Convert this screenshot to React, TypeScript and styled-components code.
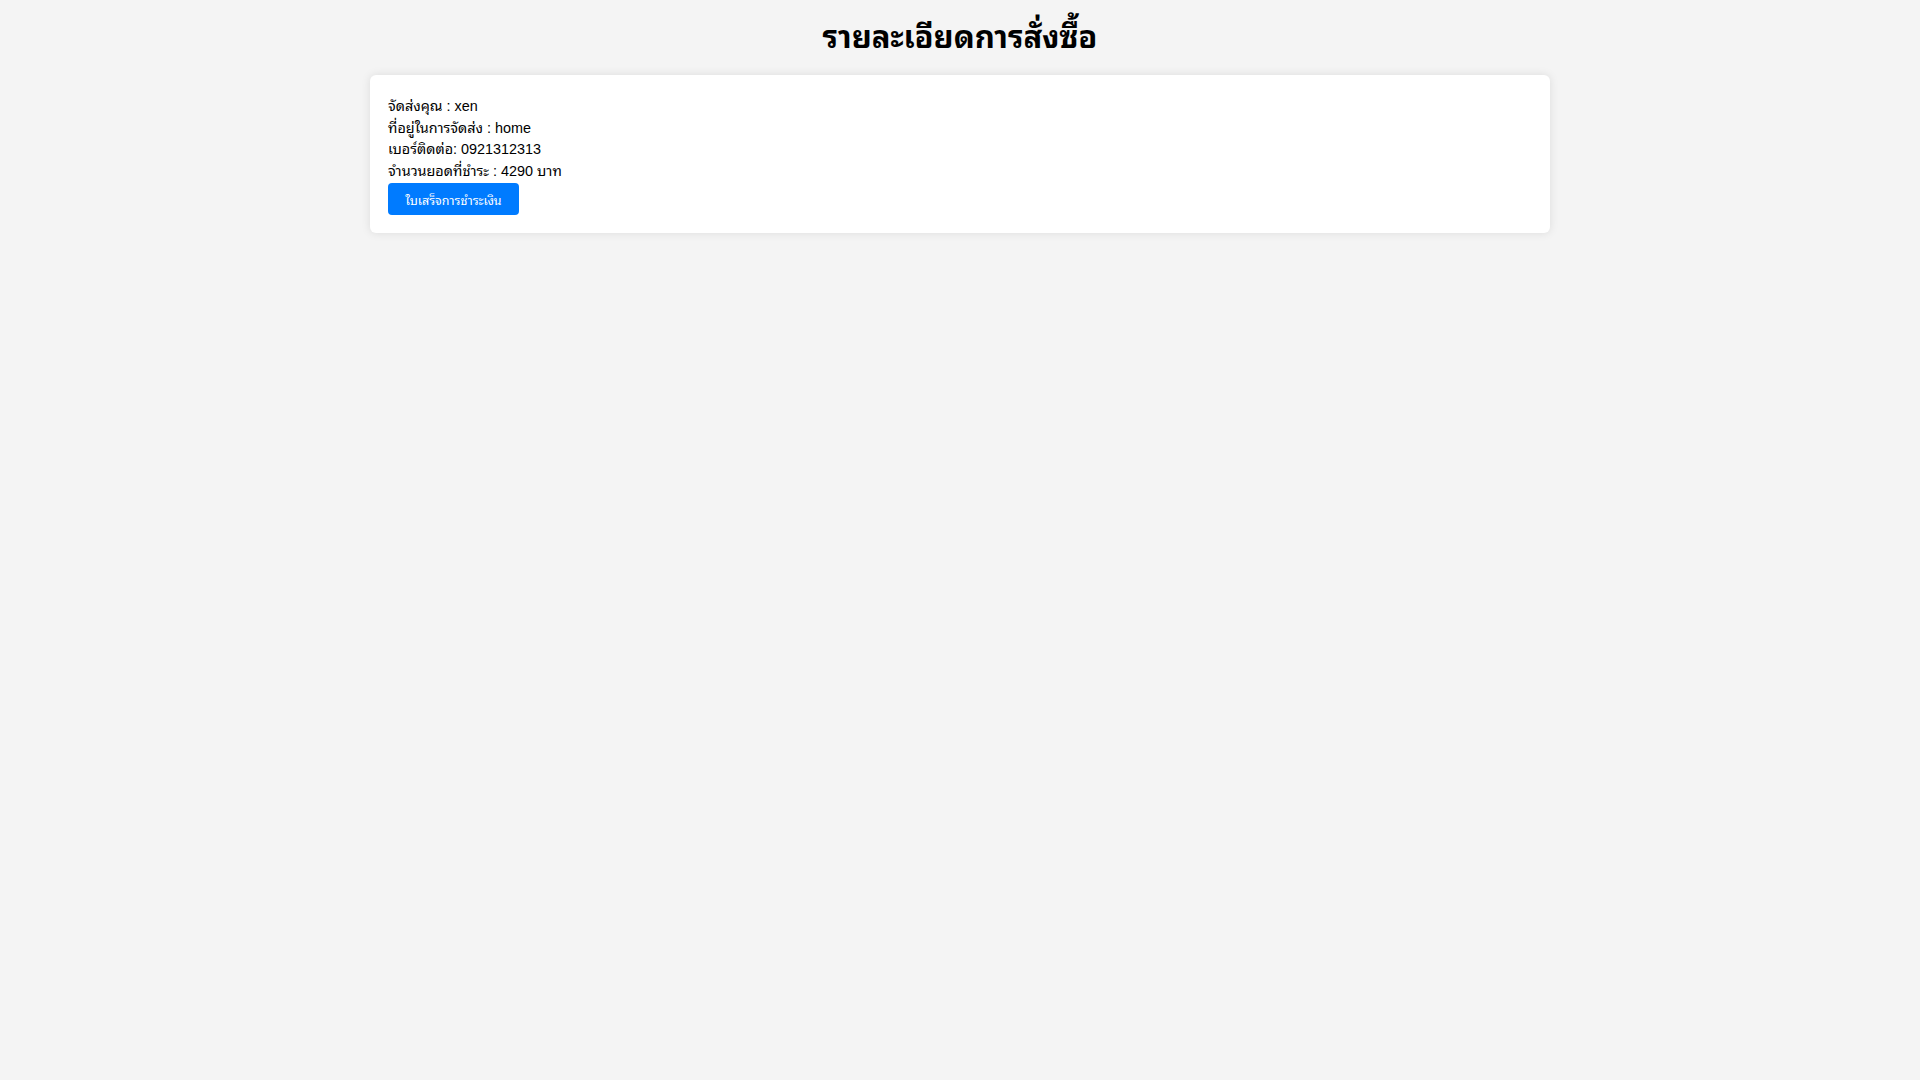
import React from "react";
import styled, { createGlobalStyle } from "styled-components";

const GlobalStyle = createGlobalStyle`
  html, body {
    margin: 0;
    padding: 0;
    background: #f4f4f4;
  }
  body {
    font-family: "Liberation Sans", "Noto Sans Thai Looped", Arial, sans-serif;
    color: #000;
  }
`;

const Page = styled.div`
  padding: 8px;
  display: flex;
  flex-direction: column;
  align-items: center;
`;

const Title = styled.h1`
  margin: 13px 0 21px;
  font-size: 31px;
  line-height: 33px;
  font-weight: bold;
  text-align: center;
`;

const Card = styled.div`
  box-sizing: border-box;
  width: 1180px;
  background: #fff;
  border-radius: 6px;
  box-shadow: 0 0 10px rgba(0, 0, 0, 0.1);
  padding: 18px;
  display: flex;
  flex-direction: column;
  align-items: flex-start;
`;

const Lines = styled.div`
  display: flex;
  flex-direction: column;
  padding-top: 3px;
  margin-bottom: 1px;
`;

const Line = styled.p`
  margin: 0;
  font-size: 14.4px;
  line-height: 21.5px;
`;

const ReceiptButton = styled.button`
  box-sizing: border-box;
  height: 32px;
  width: 131px;
  padding: 0 10px;
  border: none;
  border-radius: 4px;
  background: #007bff;
  color: #fff;
  font-family: "Liberation Sans", "Noto Sans Thai Looped", Arial, sans-serif;
  font-size: 12.5px;
  cursor: pointer;
`;

export default function App() {
  return (
    <>
      <GlobalStyle />
      <Page>
        <Title>รายละเอียดการสั่งซื้อ</Title>
        <Card>
          <Lines>
            <Line>จัดส่งคุณ : xen</Line>
            <Line>ที่อยู่ในการจัดส่ง : home</Line>
            <Line>เบอร์ติดต่อ: 0921312313</Line>
            <Line>จำนวนยอดที่ชำระ : 4290 บาท</Line>
          </Lines>
          <ReceiptButton>ใบเสร็จการชำระเงิน</ReceiptButton>
        </Card>
      </Page>
    </>
  );
}
